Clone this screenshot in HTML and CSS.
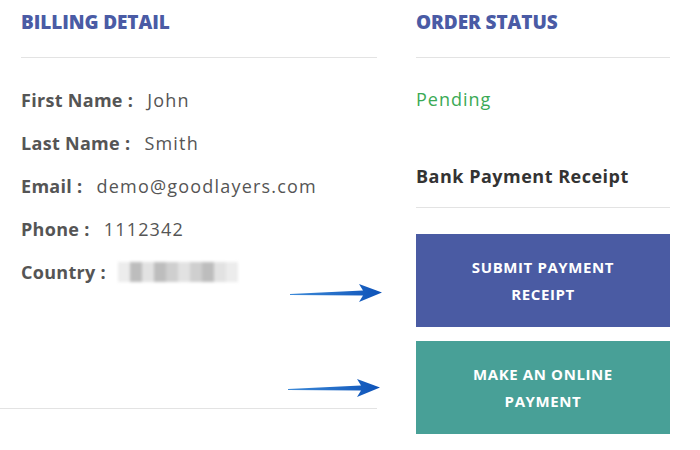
FILE: index.html
```html
<!DOCTYPE html>
<html>
<head>
<meta charset="utf-8">
<link rel="stylesheet" href="styles.css">
</head>
<body>
<div class="page">
  <section class="billing">
    <h2 class="title">BILLING DETAIL</h2>
    <ul class="fields">
      <li class="field"><span class="label">First Name :</span><span class="value">John</span></li>
      <li class="field"><span class="label">Last Name :</span><span class="value">Smith</span></li>
      <li class="field"><span class="label">Email :</span><span class="value">demo@goodlayers.com</span></li>
      <li class="field"><span class="label">Phone :</span><span class="value">1112342</span></li>
      <li class="field"><span class="label">Country :</span><span class="value blurred"><i></i><i></i><i></i><i></i><i></i><i></i><i></i><i></i><i></i><i></i></span></li>
    </ul>
  </section>
  <section class="status">
    <h2 class="title">ORDER STATUS</h2>
    <p class="pending">Pending</p>
    <h3 class="receipt">Bank Payment Receipt</h3>
    <div class="actions">
      <a class="btn btn-blue">SUBMIT PAYMENT<br>RECEIPT</a>
      <a class="btn btn-teal">MAKE AN ONLINE<br>PAYMENT</a>
    </div>
  </section>
  <svg class="arrow arrow-1" width="96" height="22" viewBox="0 0 96 22">
    <defs>
      <linearGradient id="ag" x1="0" y1="0" x2="1" y2="0">
        <stop offset="0" stop-color="#3d8ad8"/>
        <stop offset="1" stop-color="#0d52b8"/>
      </linearGradient>
    </defs>
    <path d="M2 12 L75 8.4 L71 2 L94 10.6 L71 20 L75 13.6 L2 13 Z" fill="url(#ag)"/>
  </svg>
  <svg class="arrow arrow-2" width="96" height="22" viewBox="0 0 96 22">
    <path d="M2 12 L75 8.4 L71 2 L94 10.6 L71 20 L75 13.6 L2 13 Z" fill="url(#ag)"/>
  </svg>
</div>
</body>
</html>
```
FILE: styles.css
```css
* { box-sizing: border-box; }
body {
  margin: 0;
  background: #fff;
  font-family: "Open Sans", "Liberation Sans", sans-serif;
}
.page {
  position: relative;
  display: flex;
  gap: 39px;
  width: 700px;
  height: 450px;
}
.billing {
  width: 377px;
  border-bottom: 1px solid #e3e3e3;
  height: 409px;
}
.title {
  margin: 0;
  padding: 10px 0 23px;
  line-height: 24px;
  font-size: 19px;
  font-weight: 800;
  letter-spacing: -0.1px;
  color: #4a5ba5;
  border-bottom: 1px solid #e3e3e3;
}
.billing .title { margin-left: 21px; }
.fields {
  list-style: none;
  margin: 20px 0 0 21px;
  padding: 0;
}
.field {
  display: flex;
  align-items: center;
  height: 43px;
  font-size: 18px;
  color: #555;
}
.label { font-weight: 700; margin-right: 14px; letter-spacing: 0.3px; }
.value { font-weight: 400; letter-spacing: 1.2px; }
.blurred {
  display: flex;
  width: 120px;
  height: 20px;
  margin-left: -2px;
  filter: blur(1.6px);
}
.blurred i { flex: 1; background: #cfcfcf; }
.blurred i:nth-child(2n) { background: #bdbdbd; }
.blurred i:nth-child(3n) { background: #e2e2e2; }
.blurred i:nth-child(1), .blurred i:nth-child(10) { background: #ececec; }
.status {
  width: 254px;
}
.pending {
  margin: 20px 0 0;
  line-height: 43px;
  font-size: 18px;
  letter-spacing: 1px;
  color: #3aaa55;
}
.receipt {
  margin: 33px 0 0;
  padding: 10px 0 19px;
  line-height: 24px;
  font-size: 18px;
  font-weight: 700;
  letter-spacing: 0.5px;
  color: #333;
  border-bottom: 1px solid #e3e3e3;
}
.actions {
  display: flex;
  flex-direction: column;
  gap: 14px;
  margin-top: 26px;
}
.btn {
  display: flex;
  align-items: center;
  justify-content: center;
  height: 93px;
  text-align: center;
  font-size: 15px;
  font-weight: 700;
  line-height: 27px;
  letter-spacing: 0.6px;
  color: #fff;
}
.btn-blue { background: #4a5ba3; }
.btn-teal { background: #48a097; }
.arrow { position: absolute; }
.arrow-1 { left: 288px; top: 282px; }
.arrow-2 { left: 286px; top: 377px; }
```
